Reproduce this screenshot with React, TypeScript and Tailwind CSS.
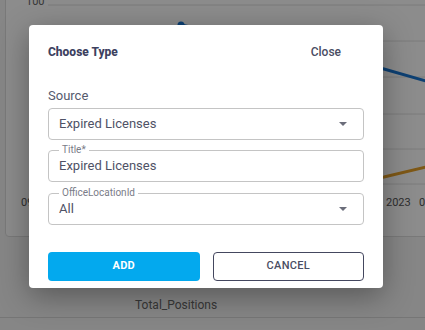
import React from 'react';

const FONT = "font-['Roboto','Liberation_Sans',sans-serif]";

function Arrow() {
  return (
    <svg width="8" height="4" viewBox="0 0 8 4">
      <path d="M0 0h8L4 4z" fill="#6b6d7a" />
    </svg>
  );
}

function SelectField({ value }: { value: string }) {
  return (
    <div className="h-8 flex items-center justify-between rounded border border-[#c4c4c4] pl-[10px] pr-[16px]">
      <span className="text-[13px] text-[#4f5266] -mt-[1px]">{value}</span>
      <Arrow />
    </div>
  );
}

function OutlinedField({ label, value, select }: { label: string; value: string; select?: boolean }) {
  return (
    <fieldset className="h-[38px] rounded border border-[#c4c4c4] pl-[10px] pr-[16px]">
      <legend className="px-[3px] text-[10px] leading-[12px] text-[#7a7c88]">{label}</legend>
      <div className="flex items-center justify-between h-[24px] -mt-[2px]">
        <span className="text-[13px] text-[#4f5266]">{value}</span>
        {select && <Arrow />}
      </div>
    </fieldset>
  );
}

export default function App() {
  return (
    <div className={`relative w-[425px] h-[330px] overflow-hidden bg-[#f4f4f4] ${FONT}`}>
      {/* chart card behind the dialog */}
      <div className="ml-[5px] -mt-[10px] h-[247px] w-[450px] rounded border border-[#dcdcdc] bg-white">
        <svg width="450" height="247" viewBox="0 0 450 247">
          <text x="20" y="14" fontSize="11" fill="#666">100</text>
          {[14, 50, 86, 123, 158, 193].map((y) => (
            <line key={y} x1="42" x2="450" y1={y} y2={y} stroke="#e0e0e0" strokeWidth="1" />
          ))}
          <polyline points="175,34 378,78 420,90" fill="none" stroke="#1976d2" strokeWidth="3" />
          <circle cx="175" cy="34" r="3.5" fill="#1976d2" />
          <polyline points="40,230 378,186 420,176" fill="none" stroke="#e6a028" strokeWidth="3" />
          <text x="15" y="215" fontSize="11" fill="#555">09</text>
          <text x="380" y="215" fontSize="11" fill="#555">2023</text>
          <text x="413" y="215" fontSize="11" fill="#555">08</text>
        </svg>
      </div>
      <div className="h-[80px] pt-[59px] pl-[135px] text-[12px] text-[#666]">Total_Positions</div>
      <div className="h-px bg-[#d8d8d8]" />

      {/* backdrop */}
      <div className="absolute inset-0 bg-black/45" />

      {/* dialog */}
      <div className="absolute left-[29px] top-[25px] w-[354px] h-[263px] rounded bg-white shadow-[0_8px_30px_rgba(0,0,0,0.35)] px-[19px]">
        <div className="flex items-center justify-between h-[14px] mt-[20px] pr-[23px]">
          <span className="text-[12px] font-extrabold text-[#3d4160]">Choose Type</span>
          <span className="text-[12px] font-medium text-[#4a4d63]">Close</span>
        </div>
        <div className="mt-[29px] text-[13px] leading-[16px] text-[#555a6e]">Source</div>
        <div className="mt-[4px] flex flex-col">
          <SelectField value="Expired Licenses" />
          <div className="mt-[4px]">
            <OutlinedField label="Title*" value="Expired Licenses" />
          </div>
          <div className="mt-[5px]">
            <OutlinedField label="OfficeLocationId" value="All" select />
          </div>
        </div>
        <div className="mt-[27px] flex gap-[13px]">
          <button className="h-[29px] w-[152px] rounded bg-[#03a9ee] text-[11px] font-bold tracking-wide text-white">
            ADD
          </button>
          <button className="h-[29px] w-[152px] rounded border border-[#44475f] text-[11px] font-medium tracking-wide text-[#4a4d63]">
            CANCEL
          </button>
        </div>
      </div>
    </div>
  );
}
